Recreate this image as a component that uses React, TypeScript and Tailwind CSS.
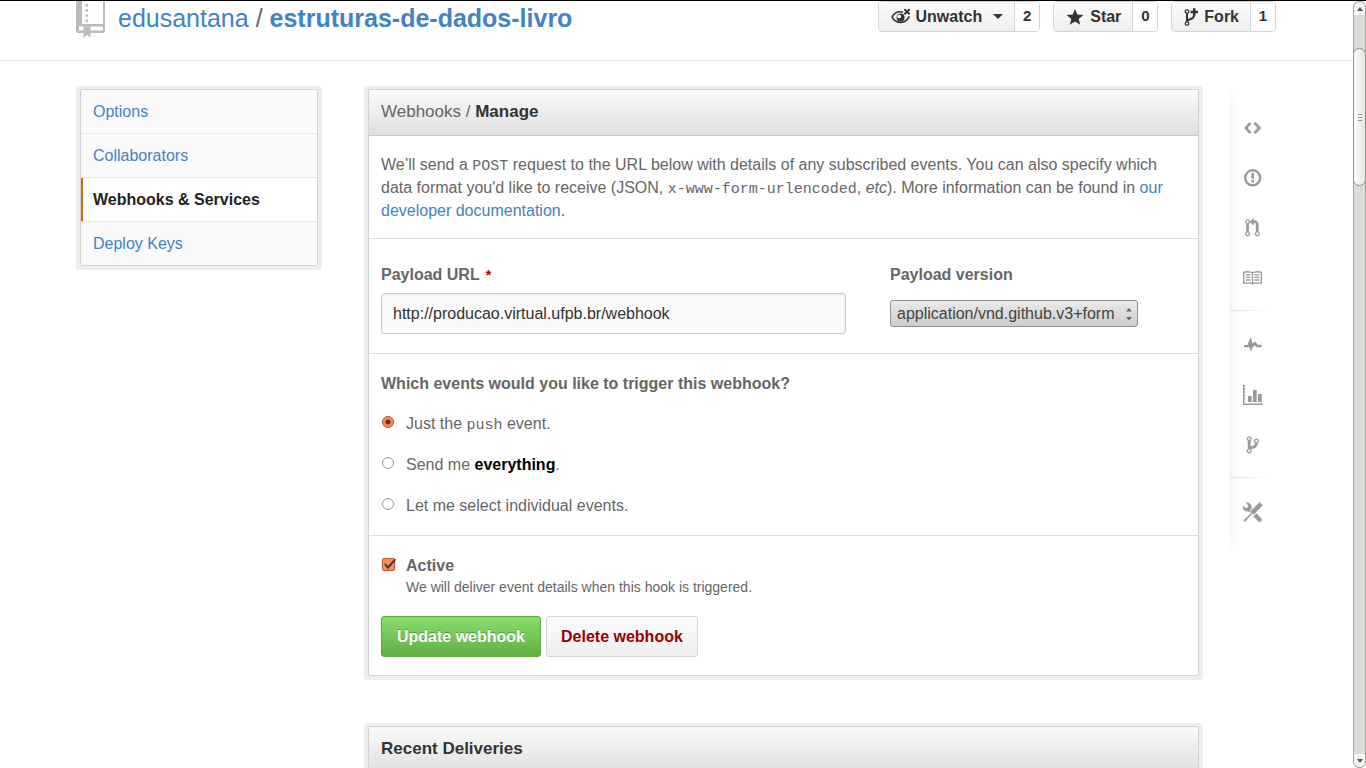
import type { ReactNode } from "react";

const toolsPath =
  "M4.48 7.27c.26.26 1.28 1.33 1.28 1.33l.56-.58-.88-.91 1.69-1.8s-.76-.74-.43-.45c.32-1.19.03-2.51-.87-3.44C4.93.5 3.66.2 2.52.51l1.93 2-.51 1.96-1.89.52-1.93-1.99C-.19 4.17.1 5.48 1 6.4c.94.98 2.29 1.26 3.48.87zm6.44 1.94l-2.33 2.3 3.84 3.98c.31.33.73.49 1.14.49.41 0 .82-.16 1.14-.49.63-.65.63-1.7 0-2.35l-3.79-3.93zM16 2.53L13.55 0 6.33 7.46l.88.91-4.31 4.46-.99.53-1.39 2.27.35.37 2.2-1.44.51-1.02L7.9 9.08l.88.91L16 2.53z";
const pullPath =
  "M11 11.28V5c-.03-.78-.34-1.47-.94-2.06C9.46 2.35 8.78 2.03 8 2H7V0L4 3l3 3V4h1c.27.02.48.11.69.31.21.2.3.42.31.69v6.28A1.993 1.993 0 0 0 10 15a1.993 1.993 0 0 0 1-3.72zm-1 2.92c-.66 0-1.2-.55-1.2-1.2 0-.65.55-1.2 1.2-1.2.65 0 1.2.55 1.2 1.2 0 .65-.55 1.2-1.2 1.2zM4 3c0-1.11-.89-2-2-2a1.993 1.993 0 0 0-1 3.72v6.56A1.993 1.993 0 0 0 2 15a1.993 1.993 0 0 0 1-3.72V4.72c.59-.34 1-.98 1-1.72zm-.8 10c0 .66-.55 1.2-1.2 1.2-.65 0-1.2-.55-1.2-1.2 0-.65.55-1.2 1.2-1.2.65 0 1.2.55 1.2 1.2zM2 4.2C1.34 4.2.8 3.65.8 3c0-.65.55-1.2 1.2-1.2.65 0 1.2.55 1.2 1.2 0 .65-.55 1.2-1.2 1.2z";
const branchPath =
  "M10 5c0-1.11-.89-2-2-2a1.993 1.993 0 0 0-1 3.72v.3c-.02.52-.23.98-.63 1.38-.4.4-.86.61-1.38.63-.83.02-1.48.16-2 .45V4.72a1.993 1.993 0 0 0-1-3.72C.88 1 0 1.89 0 3a2 2 0 0 0 1 1.72v6.56c-.59.35-1 .99-1 1.72 0 1.11.89 2 2 2 1.11 0 2-.89 2-2 0-.53-.2-1-.53-1.36.09-.06.48-.41.59-.47.25-.11.56-.17.94-.17 1.05-.05 1.95-.45 2.75-1.25S8.95 7.77 9 6.73h-.02C9.59 6.37 10 5.73 10 5zM2 1.8c.66 0 1.2.55 1.2 1.2 0 .65-.55 1.2-1.2 1.2C1.35 4.2.8 3.65.8 3c0-.65.55-1.2 1.2-1.2zm0 12.41c-.66 0-1.2-.55-1.2-1.2 0-.65.55-1.2 1.2-1.2.65 0 1.2.55 1.2 1.2 0 .65-.55 1.2-1.2 1.2zm6-8c-.66 0-1.2-.55-1.2-1.2 0-.65.55-1.2 1.2-1.2.65 0 1.2.55 1.2 1.2 0 .65-.55 1.2-1.2 1.2z";

function RepoIcon() {
  return (
    <svg width="30" height="38" viewBox="0 0 30 38" className="shrink-0" aria-hidden="true">
      <path d="M0 0H29V30Q29 32 27 32H2Q0 32 0 30Z" fill="#bbb" />
      <path d="M6 0H27V23H6Z" fill="#fff" />
      <path d="M3 25.5H27V29.5H3Z" fill="#fff" />
      <path d="M9.5 3h2.6v2.4H9.5zM9.5 8.2h2.6v2.4H9.5zM9.5 13.4h2.6v2.4H9.5zM9.5 18.6h2.6V21H9.5z" fill="#bbb" />
      <path d="M7.5 25.5H14.5V37L11 33.8L7.5 37Z" fill="#bbb" />
    </svg>
  );
}

function EyeIcon() {
  return (
    <svg width="20" height="18" viewBox="0 0 20 18" className="shrink-0" aria-hidden="true">
      <path d="M12 4.2C7 2.8 3 5.2 1 9.2 4 15 13.5 17.5 18.4 8.4" fill="none" stroke="#333" strokeWidth="1.6" />
      <circle cx="9.6" cy="9.4" r="4" fill="#333" />
      <circle cx="8.2" cy="8.4" r="1.9" fill="#f6f6f6" />
      <path d="M13.4 1.2L18.6 6.2M18.6 1.2L13.4 6.2" stroke="#333" strokeWidth="1.9" />
    </svg>
  );
}

function StarIcon() {
  return (
    <svg width="19" height="18" viewBox="0 0 19 18" className="shrink-0" aria-hidden="true">
      <path d="M9 1l2.3 5.6 6.1.4-4.7 3.9 1.5 5.9L9 13.6l-5.2 3.2 1.5-5.9L.6 7l6.1-.4z" fill="#333" />
    </svg>
  );
}

function ForkIcon() {
  return (
    <svg width="15" height="20" viewBox="0 0 15 20" className="shrink-0" aria-hidden="true">
      <g fill="none" stroke="#333">
        <circle cx="3" cy="4.6" r="1.8" strokeWidth="1.3" />
        <circle cx="3" cy="16.6" r="1.8" strokeWidth="1.3" />
        <path d="M3 6.4V14.8M3.4 13.6C5.9 11.6 9.8 13 10.2 8" strokeWidth="2.1" />
        <path d="M10.2 1.2V8.6M6.6 4.9H14" strokeWidth="2.5" />
      </g>
    </svg>
  );
}

const grey = "#999";

function RailIcon({ label, children }: { label: string; children: ReactNode }) {
  return (
    <li>
      <a href="#rail" aria-label={label} className="flex h-[50px] items-center pl-[10px]">
        <svg width="24" height="24" viewBox="0 0 24 24" aria-hidden="true">
          {children}
        </svg>
      </a>
    </li>
  );
}

function RailDivider() {
  return <li className="mt-[7px] mb-[9px] h-px w-[44px] bg-linear-to-r from-[#e2e2e2] to-white" />;
}

function Rail() {
  return (
    <nav aria-label="Repository" className="relative w-[46px] shrink-0 self-start pt-[17px] pb-[19px]">
      <div className="absolute inset-y-0 left-0 w-3 border-l border-[#eee] bg-linear-to-r from-[#f8f8f8] to-white [mask-image:linear-gradient(to_bottom,transparent,black_24px,black_calc(100%-24px),transparent)]" />
      <ul className="relative">
        <RailIcon label="Code">
          <path d="M10.6 6.8L5.8 12l4.8 5.2M14.6 6.8l4.8 5.2-4.8 5.2" fill="none" stroke={grey} strokeWidth="2.7" />
        </RailIcon>
        <RailIcon label="Issues">
          <circle cx="12.7" cy="11.8" r="7.5" fill="none" stroke={grey} strokeWidth="2.4" />
          <path d="M11.4 7h2.6v5.8h-2.6zM11.4 14h2.6v2.4h-2.6z" fill={grey} />
        </RailIcon>
        <RailIcon label="Pull Requests">
          <path transform="translate(5.2 2.2) scale(1.2)" d={pullPath} fill={grey} stroke={grey} strokeWidth="0.35" />
        </RailIcon>
        <RailIcon label="Wiki">
          <path
            d="M12.5 6.8C10.5 5.4 6 5.6 3.7 6.4V17.2H11.4L12.5 18L13.6 17.2H21.3V6.4C19 5.6 14.5 5.4 12.5 6.8V17M5.8 8.8H10.6M5.8 11.4H10.6M5.8 14H10.6M14.4 8.8H19.2M14.4 11.4H19.2M14.4 14H19.2"
            fill="none"
            stroke={grey}
            strokeWidth="1.3"
          />
        </RailIcon>
        <RailDivider />
        <RailIcon label="Pulse">
          <path
            d="M4 12h3.4l3.4-8 1.7 6.6 2.6-2.2 2.7 3.4h3.7v2.4h-5l-1.7-1.9-2.6 2.4-1.2 4-2.1-5.5-.7 1H4z"
            fill={grey}
          />
        </RailIcon>
        <RailIcon label="Graphs">
          <path
            d="M3 2h2.4v1H4.4v2.2h1v1H4.4v2.4h1v1H4.4V12h1v1H4.4v2.4h1v1H4.4v4.2h18.3V22H3zM8 13h3.7v6H8zM13 7h3.7v12H13zM18 11h3.7v8H18z"
            fill={grey}
          />
        </RailIcon>
        <RailIcon label="Network">
          <path transform="translate(6.8 2.2) scale(1.2)" d={branchPath} fill={grey} stroke={grey} strokeWidth="0.35" />
        </RailIcon>
        <RailDivider />
        <RailIcon label="Settings">
          <path transform="translate(3 2.2) scale(1.22)" d={toolsPath} fill={grey} stroke={grey} strokeWidth="0.3" />
        </RailIcon>
      </ul>
    </nav>
  );
}

function SocialButton({
  icon,
  label,
  count,
  caret,
}: {
  icon: ReactNode;
  label: string;
  count: number;
  caret?: boolean;
}) {
  return (
    <div className="flex h-[31px] rounded-[4px] border border-[#d5d5d5] font-bold text-[#333]">
      <button
        type="button"
        className="flex items-center gap-[5px] rounded-l-[3px] bg-linear-to-b from-[#fcfcfc] to-[#eee] pr-[11px] pl-3 text-base"
      >
        {icon}
        {label}
        {caret && <span className="ml-1.5 border-x-[5px] border-t-[5px] border-x-transparent border-t-[#333]" />}
      </button>
      <a
        href="#count"
        className="flex w-[25px] items-center justify-center rounded-r-[3px] border-l border-[#d5d5d5] bg-white text-[15px]"
      >
        {count}
      </a>
    </div>
  );
}

function Frame({ children, className = "" }: { children: ReactNode; className?: string }) {
  return (
    <div className={`rounded-[4px] bg-[#eee] px-1 pt-[3px] pb-1 ${className}`}>
      <div className="overflow-hidden rounded-[2px] border border-[#d2d2d2] bg-white">{children}</div>
    </div>
  );
}

function FrameHeading({ children }: { children: ReactNode }) {
  return (
    <h2 className="h-[46px] border-b border-[#c9c9c9] bg-linear-to-b from-[#fafafa] to-[#e0e0e0] px-3 text-[17px] leading-[44px] font-bold text-[#333]">
      {children}
    </h2>
  );
}

const menu = [
  { label: "Options" },
  { label: "Collaborators" },
  { label: "Webhooks & Services", current: true },
  { label: "Deploy Keys" },
];

function SettingsMenu() {
  return (
    <nav aria-label="Settings" className="w-[246px] shrink-0">
      <Frame>
        <ul>
          {menu.map((item) => (
            <li key={item.label} className="border-b border-[#e8e8e8] last:border-b-0">
              <a
                href="#settings"
                className={
                  item.current
                    ? "block border-l-2 border-[#d26911] bg-white pl-[10px] leading-[43px] font-bold text-[#222]"
                    : "block bg-[#fafafa] pl-3 leading-[43px] text-[#4183c4]"
                }
              >
                {item.label}
              </a>
            </li>
          ))}
        </ul>
      </Frame>
    </nav>
  );
}

function Radio({ id, checked, children }: { id: string; checked?: boolean; children: ReactNode }) {
  return (
    <div className="flex items-center gap-[11px]">
      <input
        type="radio"
        name="events"
        id={id}
        defaultChecked={checked}
        className="mx-px mb-[3px] size-3 shrink-0 appearance-none rounded-full border border-[#999] bg-white checked:border-[#b5532e] checked:bg-[radial-gradient(circle,#6b2f1b_0_2px,#f68d62_3px)]"
      />
      <label htmlFor={id} className="leading-[23px]">
        {children}
      </label>
    </div>
  );
}

function WebhookForm() {
  return (
    <Frame>
      <FrameHeading>
        <span className="font-normal text-[#666]">Webhooks / </span>Manage
      </FrameHeading>
      <form onSubmit={(e) => e.preventDefault()}>
        <p className="border-b border-[#ddd] px-3 pt-[17px] pb-4 leading-[23px]">
          We’ll send a <code className="font-['Liberation_Mono',monospace] text-[15px] leading-none">POST</code> request
          to the URL below with details of any subscribed events. You can also specify which data format you'd like to
          receive (JSON,{" "}
          <code className="font-['Liberation_Mono',monospace] text-[15px] leading-none">x-www-form-urlencoded</code>,{" "}
          <em>etc</em>). More information can be found in{" "}
          <a href="#docs" className="text-[#4183c4]">
            our developer documentation
          </a>
          .
        </p>

        <div className="flex gap-11 border-b border-[#ddd] px-3 pt-6 pb-[19px]">
          <div className="flex w-[465px] flex-col gap-[7px]">
            <label htmlFor="url" className="leading-[23px] font-bold">
              Payload URL <span className="ml-0.5 text-sm text-[#a00]">*</span>
            </label>
            <input
              id="url"
              type="text"
              defaultValue="http://producao.virtual.ufpb.br/webhook"
              className="h-[41px] w-full rounded-[3px] border border-[#ccc] bg-[#fafafa] px-[11px] text-[#333] shadow-[inset_0_1px_2px_rgba(0,0,0,0.075)]"
            />
          </div>
          <div className="flex flex-col gap-[14px]">
            <label htmlFor="version" className="leading-[23px] font-bold">
              Payload version
            </label>
            <div className="relative">
              <select
                id="version"
                className="block h-[27px] w-[248px] appearance-none rounded-[3px] border border-[#909090] bg-linear-to-b from-[#eaeaea] to-[#cdcdcd] pl-[6px] text-[#444]"
              >
                <option>application/vnd.github.v3+form</option>
              </select>
              <svg
                width="8"
                height="14"
                viewBox="0 0 8 14"
                className="pointer-events-none absolute top-[7px] right-[5px]"
                aria-hidden="true"
              >
                <path d="M1 4.5L4 1l3 3.5zM1 10L4 13.5 7 10z" fill="#666" />
              </svg>
            </div>
          </div>
        </div>

        <fieldset className="border-b border-[#ddd] px-3 pt-[18px] pb-[18px]">
          <legend className="float-left w-full leading-[23px] font-bold">
            Which events would you like to trigger this webhook?
          </legend>
          <div className="clear-both flex flex-col gap-[18px] pt-[17px]">
            <Radio id="push" checked>
              Just the <code className="font-['Liberation_Mono',monospace] text-[15px] leading-none">push</code> event.
            </Radio>
            <Radio id="all">
              Send me <strong className="text-black">everything</strong>.
            </Radio>
            <Radio id="some">Let me select individual events.</Radio>
          </div>
        </fieldset>

        <div className="px-3 pt-[18px] pb-[18px]">
          <div className="flex items-start gap-[11px]">
            <span className="relative mt-1 ml-px flex">
              <input
                type="checkbox"
                id="active"
                defaultChecked
                aria-describedby="active-note"
                className="size-[13px] appearance-none rounded-[2px] border border-[#c1592f] bg-[#f68d62]"
              />
              <svg
                width="14"
                height="13"
                viewBox="0 0 14 13"
                className="pointer-events-none absolute top-0 left-0"
                aria-hidden="true"
              >
                <path d="M3 6l3 3.6L13.4 1.2" fill="none" stroke="#5c3324" strokeWidth="2" />
              </svg>
            </span>
            <div>
              <label htmlFor="active" className="block leading-[23px] font-bold">
                Active
              </label>
              <p id="active-note" className="text-sm leading-5">
                We will deliver event details when this hook is triggered.
              </p>
            </div>
          </div>
          <div className="mt-[19px] flex gap-[5px]">
            <button
              type="submit"
              className="h-[41px] rounded-[3px] border border-[#5ca941] bg-linear-to-b from-[#8add6d] to-[#60b044] px-[15px] font-bold text-white [text-shadow:0_-1px_0_rgba(0,0,0,0.3)]"
            >
              Update webhook
            </button>
            <button
              type="button"
              className="h-[41px] rounded-[3px] border border-[#d5d5d5] bg-linear-to-b from-[#fcfcfc] to-[#eee] px-[14px] font-bold text-[#900]"
            >
              Delete webhook
            </button>
          </div>
        </div>
      </form>
    </Frame>
  );
}

function Scrollbar() {
  return (
    <div
      aria-hidden="true"
      className="ml-px flex w-[13px] shrink-0 flex-col rounded-[6px] border-x border-[#a3a3a0] bg-[#dcdbd9]"
    >
      <div className="flex h-[14px] items-center justify-center rounded-t-full border-t border-[#a3a3a0] bg-[#f4f4f2]">
        <span className="border-x-[3px] border-b-[4px] border-x-transparent border-b-[#555]" />
      </div>
      <div className="-mx-px mt-[33px] flex h-[138px] flex-col items-center justify-center gap-[2px] rounded-full border border-[#8f8f8c] bg-linear-to-r from-white to-[#e6e5e3]">
        <span className="h-px w-[4px] bg-[#999]" />
        <span className="h-px w-[4px] bg-[#999]" />
        <span className="h-px w-[4px] bg-[#999]" />
      </div>
      <div className="mt-auto flex h-[14px] items-center justify-center rounded-b-full border-b border-[#a3a3a0] bg-[#f4f4f2]">
        <span className="border-x-[3px] border-t-[4px] border-x-transparent border-t-[#555]" />
      </div>
    </div>
  );
}

export default function App() {
  return (
    <div className="flex h-screen overflow-hidden border-t border-black bg-white font-['Liberation_Sans',Arial,sans-serif] text-base text-[#666]">
      <div className="min-w-0 flex-1 overflow-hidden">
        <header className="border-b border-[#eaeaea]">
          <div className="mx-auto flex h-[59px] max-w-[1200px] items-start justify-between">
            <h1 className="flex gap-3 text-[25px] leading-[34px] text-[#666]">
              <RepoIcon />
              <span>
                <a href="#owner" className="text-[#4183c4]">
                  edusantana
                </a>{" "}
                /{" "}
                <a href="#repo" className="font-bold text-[#4183c4]">
                  estruturas-de-dados-livro
                </a>
              </span>
            </h1>
            <div className="flex gap-[13px]">
              <SocialButton icon={<EyeIcon />} label="Unwatch" count={2} caret />
              <SocialButton icon={<StarIcon />} label="Star" count={0} />
              <SocialButton icon={<ForkIcon />} label="Fork" count={1} />
            </div>
          </div>
        </header>

        <div className="mx-auto flex max-w-[1200px] pt-[25px]">
          <SettingsMenu />
          <main className="ml-[42px] min-w-0 flex-1">
            <WebhookForm />
            <Frame className="mt-[43px]">
              <FrameHeading>Recent Deliveries</FrameHeading>
            </Frame>
          </main>
          <div className="ml-[27px]">
            <Rail />
          </div>
        </div>
      </div>
      <Scrollbar />
    </div>
  );
}
